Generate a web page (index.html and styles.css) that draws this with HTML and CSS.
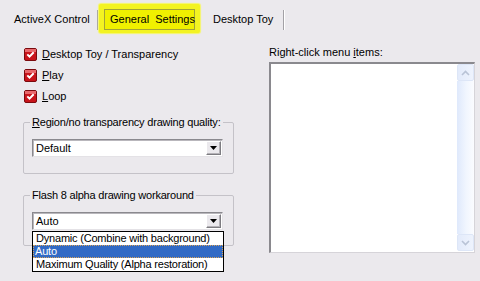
FILE: index.html
```html
<!doctype html>
<html lang="en">
<head>
    <meta charset="UTF-8">
    <title>General Settings</title>
    <link rel="stylesheet" href="styles.css">
</head>
<body>
<nav class="tabs">
    <span class="tab tab-first">ActiveX Control</span>
    <span class="tab-sep"></span>
    <span class="tab-active"><span class="tab-inner">General&nbsp; Settings</span></span>
    <span class="tab tab-last">Desktop Toy</span>
    <span class="tab-sep"></span>
</nav>

<main class="page">
    <section class="col-left">
        <label class="check">
            <svg class="box" width="13" height="13" viewBox="0 0 13 13">
                <rect x="0.5" y="0.5" width="12" height="12" rx="1.5" fill="#c8141b" stroke="#7a0a0e"/>
                <rect x="1" y="1" width="11" height="3" fill="#e8686c"/>
                <path d="M3.3 6.4 L5.5 8.6 L9.7 4.2" fill="none" stroke="#fff" stroke-width="2"/>
            </svg>
            <span><u>D</u>esktop Toy / Transparency</span>
        </label>
        <label class="check">
            <svg class="box" width="13" height="13" viewBox="0 0 13 13">
                <rect x="0.5" y="0.5" width="12" height="12" rx="1.5" fill="#c8141b" stroke="#7a0a0e"/>
                <rect x="1" y="1" width="11" height="3" fill="#e8686c"/>
                <path d="M3.3 6.4 L5.5 8.6 L9.7 4.2" fill="none" stroke="#fff" stroke-width="2"/>
            </svg>
            <span><u>P</u>lay</span>
        </label>
        <label class="check">
            <svg class="box" width="13" height="13" viewBox="0 0 13 13">
                <rect x="0.5" y="0.5" width="12" height="12" rx="1.5" fill="#c8141b" stroke="#7a0a0e"/>
                <rect x="1" y="1" width="11" height="3" fill="#e8686c"/>
                <path d="M3.3 6.4 L5.5 8.6 L9.7 4.2" fill="none" stroke="#fff" stroke-width="2"/>
            </svg>
            <span><u>L</u>oop</span>
        </label>

        <fieldset class="group">
            <legend><u>R</u>egion/no transparency drawing quality:</legend>
            <div class="combo">
                <span class="combo-value">Default</span>
                <span class="combo-btn">
                    <svg width="7" height="4" viewBox="0 0 7 4"><path d="M0 0 H7 L3.5 4 Z" fill="#000"/></svg>
                </span>
            </div>
        </fieldset>

        <fieldset class="group group-last">
            <legend>Flash 8 alpha drawing workaround</legend>
            <div class="combo">
                <span class="combo-value">Auto</span>
                <span class="combo-btn">
                    <svg width="7" height="4" viewBox="0 0 7 4"><path d="M0 0 H7 L3.5 4 Z" fill="#000"/></svg>
                </span>
                <ul class="combo-list">
                    <li>Dynamic (Combine with background)</li>
                    <li class="selected">Auto</li>
                    <li>Maximum Quality (Alpha restoration)</li>
                </ul>
            </div>
        </fieldset>
    </section>

    <section class="col-right">
        <div class="list-label">Right-click menu <u>i</u>tems:</div>
        <div class="listbox">
            <div class="list-area"></div>
            <div class="scrollbar">
                <span class="sb-btn">
                    <svg width="9" height="6" viewBox="0 0 9 6"><path d="M1 5 L4.5 1.5 L8 5" fill="none" stroke="#b9c3d6" stroke-width="1.6"/></svg>
                </span>
                <span class="sb-track"></span>
                <span class="sb-btn">
                    <svg width="9" height="6" viewBox="0 0 9 6"><path d="M1 1 L4.5 4.5 L8 1" fill="none" stroke="#b9c3d6" stroke-width="1.6"/></svg>
                </span>
            </div>
        </div>
    </section>
</main>
</body>
</html>
```

FILE: styles.css
```css
:root {
    --face: #ebe9ed;
    --group-line: #c4c2c8;
    --dark-edge: #8a898e;
    --light-edge: #d6d4d9;
    --select: #316ac5;
}

* {
    box-sizing: border-box;
}

body {
    margin: 0;
    width: 480px;
    height: 281px;
    overflow: hidden;
    background-color: var(--face);
    font-family: 'Liberation Sans', Arial, sans-serif;
    font-size: 11px;
    line-height: 13px;
    color: #000;
}

u {
    text-underline-offset: 1px;
}

/* tab strip */

.tabs {
    display: flex;
    align-items: flex-start;
    height: 37px;
}

.tab {
    margin-top: 13px;
    white-space: nowrap;
}

.tab-first {
    width: 97px;
    padding-left: 14px;
}

.tab-last {
    width: 83px;
    padding-left: 13px;
}

.tab-sep {
    width: 1px;
    height: 20px;
    margin-top: 10px;
    margin-right: 1px;
    background-color: #a3a1a6;
    box-shadow: 1px 0 0 #fff;
}

.tab-active {
    width: 101px;
    height: 29px;
    margin-top: 4px;
    padding: 5px 5px 3px 5px;
    background-color: #f3f322;
    border-radius: 2px;
    box-shadow: 0 0 1px 1px #f6f66a;
}

.tab-inner {
    display: block;
    height: 21px;
    padding-left: 5px;
    line-height: 19px;
    border: 1px solid #a2a23a;
    background-color: #f0f000;
    white-space: nowrap;
}

/* page body */

.page {
    display: flex;
    padding-top: 7px;
}

.col-left {
    width: 211px;
    margin-left: 23px;
}

.col-right {
    width: 206px;
    margin-left: 35px;
    padding-top: 2px;
}

.check {
    display: flex;
    align-items: center;
    gap: 5px;
    height: 21px;
    padding-left: 1px;
}

.box {
    flex: none;
}

.group {
    margin: 9px 0 0;
    padding: 10px 9px 16px 8px;
    border: 1px solid var(--group-line);
    border-radius: 2px;
    min-width: 0;
}

.group-last {
    margin-top: 15px;
    padding-bottom: 15px;
}

.group legend {
    padding: 0 2px;
    margin-left: -2px;
    white-space: nowrap;
    letter-spacing: -0.2px;
}

/* combo box */

.combo {
    position: relative;
    display: flex;
    align-items: center;
    width: 191px;
    height: 18px;
    padding: 0 1px 0 3px;
    background-color: #fff;
    border: 1px solid;
    border-color: var(--dark-edge) #e4e2e6 #e4e2e6 var(--dark-edge);
    box-shadow: inset 1px 1px 0 #b9b7bc;
}

.combo-value {
    flex: 1;
}

.combo-btn {
    display: flex;
    align-items: center;
    justify-content: center;
    width: 15px;
    height: 14px;
    background-color: var(--face);
    border: 1px solid;
    border-color: #fff #7d7c81 #7d7c81 #fff;
    box-shadow: inset -1px -1px 0 #b4b2b7;
}

.combo-list {
    position: absolute;
    top: 18px;
    left: -1px;
    z-index: 2;
    width: 192px;
    margin: 0;
    padding: 0;
    list-style: none;
    background-color: #fff;
    border: 1px solid #000;
    letter-spacing: -0.2px;
}

.combo-list li {
    height: 13px;
    padding-left: 2px;
    line-height: 12px;
    white-space: nowrap;
    border: 1px solid transparent;
    border-width: 0 1px;
}

.combo-list li.selected {
    color: #fff;
    background-color: var(--select);
    border: 1px dotted #d9a357;
    line-height: 11px;
    padding-left: 1px;
}

/* list box */

.list-label {
    margin-bottom: 3px;
}

.listbox {
    display: flex;
    height: 191px;
    background-color: #fff;
    border-style: solid;
    border-width: 2px 1px 1px 2px;
    border-color: var(--dark-edge) var(--light-edge) var(--light-edge) var(--dark-edge);
}

.list-area {
    flex: 1;
}

.scrollbar {
    display: flex;
    flex-direction: column;
    width: 17px;
    padding-bottom: 1px;
}

.sb-btn {
    display: flex;
    align-items: center;
    justify-content: center;
    height: 17px;
    border: 1px solid #dde6f7;
    border-radius: 2px;
    background: linear-gradient(to right, #e3ebfb, #eef3fd);
}

.sb-track {
    flex: 1;
    background: linear-gradient(to right, #dfe9fc, #f1f6fe 55%, #fbfcff);
}
```
